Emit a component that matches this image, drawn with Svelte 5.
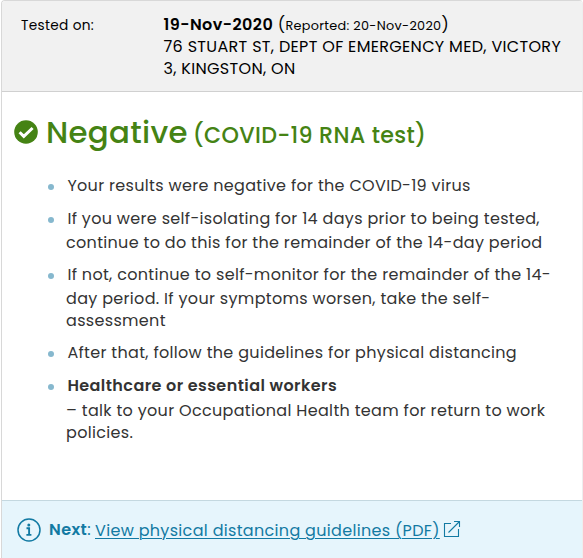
<script>
    const location = ['76 STUART ST, DEPT OF EMERGENCY MED, VICTORY', '3, KINGSTON, ON'];
    const advice = [
        { lines: ['Your results were negative for the COVID-19 virus'] },
        { lines: ['If you were self-isolating for 14 days prior to being tested,', 'continue to do this for the remainder of the 14-day period'] },
        { lines: ['If not, continue to self-monitor for the remainder of the 14-', 'day period. If your symptoms worsen, take the self-', 'assessment'] },
        { lines: ['After that, follow the guidelines for physical distancing'] },
        { title: 'Healthcare or essential workers', lines: ['– talk to your Occupational Health team for return to work', 'policies.'] }
    ];
</script>

<main class="card">
    <header>
        <div class="label">Tested on:</div>
        <div class="details">
            <div class="date"><strong>19-Nov-2020</strong> <span class="reported">(<small>Reported: 20-Nov-2020</small>)</span></div>
            {#each location as line}
                <div class="place">{line}</div>
            {/each}
        </div>
    </header>

    <section>
        <h1>
            <svg class="check" viewBox="0 0 24 24" aria-hidden="true">
                <circle cx="12" cy="12" r="11.8" fill="#458314" />
                <path d="M5.6 12.2l4.2 4.2 8.8-8.4" fill="none" stroke="#fff" stroke-width="3" />
            </svg>
            <span class="result">Negative</span>
            <span class="test">(COVID-19 RNA test)</span>
        </h1>
        <ul>
            {#each advice as item}
                <li>
                    {#if item.title}<strong class="line title">{item.title}</strong>{/if}
                    {#each item.lines as line}
                        <span class="line">{line}</span>
                    {/each}
                </li>
            {/each}
        </ul>
    </section>

    <footer>
        <svg class="info" viewBox="0 0 24 24" aria-hidden="true">
            <circle cx="12" cy="12" r="11" fill="none" stroke="#127aa3" stroke-width="1.5" />
            <circle cx="11.8" cy="7" r="1.5" fill="#127aa3" />
            <path d="M9.5 10.3h2.6v6.5M9.4 16.9h5" fill="none" stroke="#127aa3" stroke-width="1.9" />
        </svg>
        <strong class="next">Next<span>:</span></strong>
        <a href="#guidelines">View physical distancing guidelines (PDF)</a>
        <svg class="external" viewBox="0 0 18 18" aria-hidden="true">
            <path d="M8 3.5H1.5v13h14V9M5.5 12.5L16.5 1.5M11 1.5h5.5V7" fill="none" stroke="#127aa3" stroke-width="1.1" />
        </svg>
    </footer>
</main>

<style>
    :global(body){
        background: #fff;
    }
    .card{
        box-sizing: border-box;
        height: 558px;
        width: 582px;
        margin-left: 1px;
        overflow: hidden;
        display: flex;
        flex-direction: column;
        border: 1px solid #d8d8d8;
        border-right-color: #eee;
        border-bottom: none;
        border-radius: 4px 4px 0 0;
        font-family: Poppins, Inter, sans-serif;
        font-size: 16px;
        letter-spacing: 0.32px;
        white-space: nowrap;
    }
    header{
        box-sizing: border-box;
        height: 91px;
        flex: none;
        display: flex;
        padding: 13px 0 0 19px;
        background: #f1f1f1;
        border-bottom: 1px solid #d0d0d0;
        color: #000;
        line-height: 22px;
    }
    .label{
        width: 142.5px;
        padding-top: 1px;
        font-size: 13.7px;
    }
    .date{
        height: 22px;
    }
    strong{
        font-weight: 600;
        letter-spacing: 0.42px;
    }
    small{
        font-size: 12.8px;
    }
    section{
        flex: 1;
        color: #333;
    }
    h1{
        display: flex;
        align-items: baseline;
        margin: 19px 0 0 12px;
        height: 44px;
        line-height: 44px;
        color: #458314;
        font-weight: 500;
    }
    .check{
        width: 24px;
        height: 24px;
        align-self: center;
        flex: none;
        margin: 0 8px 2px 0;
    }
    .result{
        font-size: 30.8px;
        margin-right: 5px;
    }
    .test{
        font-size: 22.2px;
    }
    ul{
        list-style: none;
        display: flex;
        flex-direction: column;
        gap: 10px;
        margin: 20px 0 0 46px;
        padding: 0;
    }
    li{
        display: flex;
        flex-direction: column;
        align-items: flex-start;
        position: relative;
        padding-left: 18px;
    }
    li::before{
        content: '';
        position: absolute;
        left: 0;
        top: 9px;
        width: 6px;
        height: 6px;
        border-radius: 50%;
        background: #86b8ce;
    }
    .line{
        line-height: 22px;
    }
    .line:first-child{
        margin: 0 0 2px 1.4px;
    }
    .line:only-child{
        margin-bottom: 1px;
    }
    .title:first-child{
        margin-bottom: 3px;
    }
    footer{
        box-sizing: border-box;
        height: 58px;
        flex: none;
        display: flex;
        align-items: center;
        padding-left: 15px;
        background: #e6f5fc;
        border-top: 1px solid #c4d8e0;
        color: #127aa3;
    }
    .info{
        width: 24px;
        height: 24px;
        margin-right: 8px;
    }
    .next{
        margin-right: 4px;
    }
    .next span{
        font-weight: 400;
    }
    a{
        color: inherit;
        padding-top: 2px;
        text-decoration-thickness: 1px;
        text-underline-offset: 2px;
    }
    .external{
        width: 18px;
        height: 18px;
        margin: 0 0 2px 3px;
    }
</style>
